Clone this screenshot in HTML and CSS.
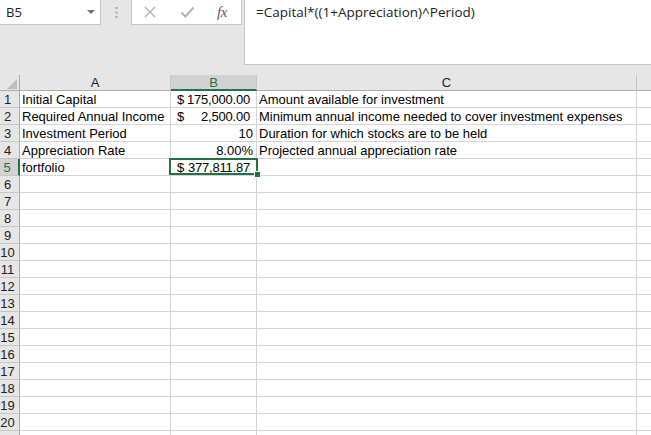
FILE: index.html
```html
<!DOCTYPE html>
<html>
<head>
<meta charset="utf-8">
<link rel="stylesheet" href="styles.css">
</head>
<body>
<div class="toolbar">
  <div class="namebox"><span>B5</span><span class="arrow"></span></div>
  <div class="dots">
    <svg width="3" height="11" viewBox="0 0 3 11"><rect x="0.5" y="0" width="2" height="2" fill="#a8a8a8"/><rect x="0.5" y="4.5" width="2" height="2" fill="#a8a8a8"/><rect x="0.5" y="9" width="2" height="2" fill="#a8a8a8"/></svg>
  </div>
  <div class="fbtns">
    <span class="icon"><svg width="14" height="14" viewBox="0 0 14 14"><path d="M2 2 L12 12 M12 2 L2 12" stroke="#b3b3b3" stroke-width="1.4" fill="none"/></svg></span>
    <span class="icon"><svg width="15" height="14" viewBox="0 0 15 14"><path d="M1.5 7.5 L5.5 11.5 L13.5 2.5" stroke="#b3b3b3" stroke-width="2" fill="none"/></svg></span>
    <span class="fx">fx</span>
  </div>
  <div class="formula">=Capital*((1+Appreciation)^Period)</div>
</div>
<div class="sheet">
  <div class="corner"><svg width="19" height="15" viewBox="0 0 19 15"><polygon points="7,14 17,14 17,4" fill="#bdbdbd"/></svg></div>
  <div class="ch">A</div><div class="ch on">B</div><div class="ch">C</div><div class="ch last"></div>

  <div class="rh">1</div><div>Initial Capital</div><div class="acct"><span>$</span><span class="amt">175,000.00</span></div><div>Amount available for investment</div><div class="last"></div>
  <div class="rh">2</div><div>Required Annual Income</div><div class="acct"><span>$</span><span class="amt">2,500.00</span></div><div>Minimum annual income needed to cover investment expenses</div><div class="last"></div>
  <div class="rh">3</div><div>Investment Period</div><div class="num">10</div><div>Duration for which stocks are to be held</div><div class="last"></div>
  <div class="rh">4</div><div>Appreciation Rate</div><div class="num">8.00%</div><div>Projected annual appreciation rate</div><div class="last"></div>
  <div class="rh on">5</div><div>fortfolio</div><div class="acct sel"><span>$</span><span class="amt">377,811.87</span></div><div></div><div class="last"></div>
  <div class="rh">6</div><div></div><div></div><div></div><div class="last"></div>
  <div class="rh">7</div><div></div><div></div><div></div><div class="last"></div>
  <div class="rh">8</div><div></div><div></div><div></div><div class="last"></div>
  <div class="rh">9</div><div></div><div></div><div></div><div class="last"></div>
  <div class="rh">10</div><div></div><div></div><div></div><div class="last"></div>
  <div class="rh">11</div><div></div><div></div><div></div><div class="last"></div>
  <div class="rh">12</div><div></div><div></div><div></div><div class="last"></div>
  <div class="rh">13</div><div></div><div></div><div></div><div class="last"></div>
  <div class="rh">14</div><div></div><div></div><div></div><div class="last"></div>
  <div class="rh">15</div><div></div><div></div><div></div><div class="last"></div>
  <div class="rh">16</div><div></div><div></div><div></div><div class="last"></div>
  <div class="rh">17</div><div></div><div></div><div></div><div class="last"></div>
  <div class="rh">18</div><div></div><div></div><div></div><div class="last"></div>
  <div class="rh">19</div><div></div><div></div><div></div><div class="last"></div>
  <div class="rh">20</div><div></div><div></div><div></div><div class="last"></div>
  <div class="rh"></div><div></div><div></div><div></div><div class="last"></div>
</div>
</body>
</html>
```

FILE: styles.css
```css
html, body {
  margin: 0;
  padding: 0;
}
body {
  width: 651px;
  height: 435px;
  overflow: hidden;
  background: #ffffff;
  font-family: "Liberation Sans", Arial, sans-serif;
  color: #000;
}

/* ---------- formula bar ---------- */
.toolbar {
  display: flex;
  align-items: flex-start;
  height: 75px;
  background: #e6e6e6;
}
.namebox {
  box-sizing: border-box;
  width: 101px;
  height: 25px;
  background: #fff;
  border-right: 1px solid #c6c6c6;
  border-bottom: 1px solid #c6c6c6;
  display: flex;
  align-items: center;
  justify-content: space-between;
  padding: 0 5px 0 6px;
  font-family: "Open Sans", "Noto Sans", sans-serif;
  font-size: 13px;
  color: #222;
}
.arrow {
  width: 0;
  height: 0;
  border-left: 4px solid transparent;
  border-right: 4px solid transparent;
  border-top: 4px solid #6f6f6f;
}
.dots {
  width: 30px;
  height: 25px;
  display: flex;
  align-items: center;
  justify-content: center;
}
.dots svg { display: block; }
.fbtns {
  box-sizing: border-box;
  width: 111px;
  height: 25px;
  background: #fff;
  border: 1px solid #c6c6c6;
  border-top: 0;
  display: flex;
  align-items: center;
  gap: 23px;
  padding-left: 11px;
}
.icon { display: flex; }
.icon svg { display: block; }
.fx {
  font-family: "Liberation Serif", "DejaVu Serif", serif;
  font-style: italic;
  font-size: 15px;
  color: #5a5a5a;
  margin-left: -1px;
  letter-spacing: -0.5px;
}
.formula {
  box-sizing: border-box;
  flex: 1;
  height: 65px;
  margin-left: 2px;
  background: #fff;
  border-left: 1px solid #c6c6c6;
  border-bottom: 1px solid #c6c6c6;
  padding: 3px 0 0 11px;
  font-family: "Open Sans", "Noto Sans", sans-serif;
  font-size: 13.5px;
  line-height: 18px;
  color: #222;
}

/* ---------- sheet grid ---------- */
.sheet {
  display: grid;
  grid-template-columns: 20px 151px 86px 380px 1fr;
  grid-template-rows: 16px;
  grid-auto-rows: 17px;
}
.sheet > div {
  box-sizing: border-box;
  border-right: 1px solid #d4d4d4;
  border-bottom: 1px solid #d4d4d4;
  white-space: nowrap;
  font-size: 13px;
  line-height: 14px;
  padding: 2px 2px 0;
}
.sheet > div.last { border-right: 0; }

.corner {
  background: #e6e6e6;
  border-right-color: #ababab !important;
  border-bottom-color: #ababab !important;
  padding: 0 !important;
}
.corner svg { display: block; }

.ch {
  background: #e6e6e6;
  text-align: center;
  color: #222;
  padding-top: 1px !important;
  border-right-color: #c6c6c6 !important;
  border-bottom-color: #ababab !important;
}
.ch.on {
  background: #d2d2d2;
  color: #217346;
  border-bottom: 2px solid #217346 !important;
}

.rh {
  background: #e6e6e6;
  text-align: center;
  color: #222;
  padding: 2px 4px 0 0 !important;
  border-right-color: #ababab !important;
  border-bottom-color: #c6c6c6 !important;
}
.rh.on {
  background: #d2d2d2;
  color: #217346;
  border-right: 2px solid #217346 !important;
}

.num { text-align: right; padding-right: 3px !important; }
.acct {
  display: flex;
  justify-content: space-between;
  padding-left: 6px !important;
  padding-right: 6px !important;
}
.amt { letter-spacing: -0.2px; }

.sel { position: relative; }
.sel::before {
  content: "";
  position: absolute;
  left: -2px;
  top: -1px;
  right: -2px;
  bottom: 0;
  border: 2px solid #217346;
}
.sel::after {
  content: "";
  position: absolute;
  right: -5px;
  bottom: -3px;
  width: 5px;
  height: 5px;
  background: #217346;
  border: 1px solid #fff;
}
```
